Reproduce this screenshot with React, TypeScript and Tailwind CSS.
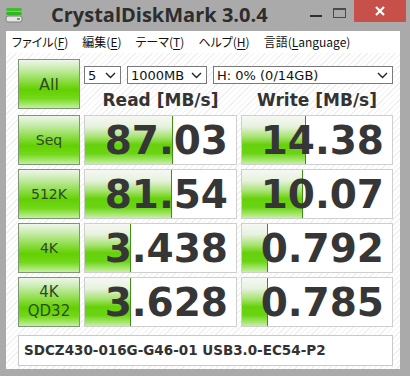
import React from "react";

const ui = { fontFamily: '"DejaVu Sans", "Liberation Sans", sans-serif' };
const jp = { fontFamily: '"Noto Sans CJK JP", "Noto Sans", sans-serif' };

type Row = { label: string[]; read: string; write: string; readFill: number; writeFill: number };

const rows: Row[] = [
  { label: ["Seq"], read: "87.03", write: "14.38", readFill: 88, writeFill: 64 },
  { label: ["512K"], read: "81.54", write: "10.07", readFill: 87, writeFill: 61 },
  { label: ["4K"], read: "3.438", write: "0.792", readFill: 46, writeFill: 26 },
  { label: ["4K", "QD32"], read: "3.628", write: "0.785", readFill: 46, writeFill: 26 },
];

const Chevron = () => (
  <svg width="11" height="7" viewBox="0 0 11 7" className="shrink-0">
    <polyline points="1,1 5.5,5.5 10,1" fill="none" stroke="#222" strokeWidth="1.4" />
  </svg>
);

const Select = ({ text, className }: { text: string; className: string }) => (
  <div className={`h-[18px] border border-[#7a7a7a] bg-white flex items-center justify-between pl-[3px] pr-[4px] text-[13px] text-[#111] leading-none ${className}`}>
    <span>{text}</span>
    <Chevron />
  </div>
);

const GreenButton = ({ lines }: { lines: string[] }) => (
  <div className="h-[50px] border border-[#7f9479] bg-[linear-gradient(180deg,#eef6ea_0%,#c9ecae_18%,#8fde4c_42%,#62d000_62%,#74d81c_80%,#c3f09e_100%)] flex flex-col items-center justify-center text-[#2e4a24] leading-[19px]">
    {lines.map((l) => (
      <span key={l} className={l === "All" ? "text-[16px]" : lines.length > 1 ? "text-[15px]" : "text-[14px]"}>
        {l}
      </span>
    ))}
  </div>
);

const Result = ({ value, fill }: { value: string; fill: number }) => (
  <div className="relative h-[50px] border border-[#cfcfcf] bg-white flex items-center justify-end pr-[8px]">
    <div
      className="absolute left-0 top-0 bottom-0 border-r border-[#3f8f17] bg-[linear-gradient(180deg,#f6f8f4_0%,#e6f2de_22%,#a6e36e_44%,#66d10a_60%,#6ad414_78%,#c6f0a3_100%)]"
      style={{ width: fill }}
    />
    <span className="relative text-[39px] font-bold text-[#363636] leading-none">{value}</span>
  </div>
);

const DriveIcon = () => (
  <svg width="18" height="16" viewBox="0 0 18 16">
    <rect x="1" y="1" width="16" height="3" rx="1.5" fill="#3fbf2a" />
    <rect x="1" y="5" width="16" height="3" rx="1.5" fill="#36b524" />
    <rect x="1" y="9" width="16" height="6" rx="2" fill="#e4e4e4" stroke="#7d7d7d" />
    <rect x="12" y="11" width="3" height="2" fill="#3fbf2a" />
  </svg>
);

const MenuItem = ({ pre, key1 }: { pre: string; key1: string }) => (
  <span className="whitespace-nowrap">
    {pre}(<span className="underline underline-offset-2">{key1}</span>)
  </span>
);

export default function App() {
  return (
    <div className="w-[410px] h-[376px] bg-[#aaaaaa] flex flex-col overflow-hidden" style={ui}>
      {/* title bar */}
      <div className="h-[31px] flex items-start shrink-0 pr-[4px]">
        <div className="pl-[5px] pt-[7px]">
          <DriveIcon />
        </div>
        <div
          className="ml-[28px] mt-[1px] text-[20px] font-bold text-[#2d2d2d] leading-[27px]"
          style={{ fontFamily: '"Open Sans", "Noto Sans", sans-serif' }}
        >
          CrystalDiskMark 3.0.4
        </div>
        <div className="ml-auto flex items-start">
          <div className="w-[12px] h-[2px] bg-[#2f2f2f] mt-[15px]" />
          <div className="ml-[11px] mt-[8px] w-[13px] h-[10px] border border-[#4a4a4a] border-t-[2px]" />
          <div className="ml-[8px] w-[52px] h-[22px] bg-[#c7504b] flex items-center justify-center">
            <svg width="10" height="10" viewBox="0 0 10 10">
              <path d="M1 1 L9 9 M9 1 L1 9" stroke="#fff" strokeWidth="2.2" />
            </svg>
          </div>
        </div>
      </div>

      <div className="flex-1 flex flex-col ml-[6px] mr-[10px] mb-[7px] bg-white">
        {/* menu */}
        <div
          className="h-[22px] flex items-center gap-[14px] pl-[6px] text-[12px] text-[#111] [font-feature-settings:'palt']"
          style={jp}
        >
          <MenuItem pre="ファイル" key1="F" />
          <MenuItem pre="編集" key1="E" />
          <MenuItem pre="テーマ" key1="T" />
          <MenuItem pre="ヘルプ" key1="H" />
          <span className="whitespace-nowrap">
            言語(<span className="underline underline-offset-2">L</span>anguage)
          </span>
        </div>

        {/* client */}
        <div className="flex-1 pl-[12px] pt-[6px] bg-[repeating-linear-gradient(135deg,#ffffff_0px,#ffffff_3px,#f0f0f0_3px,#f0f0f0_4px)]">
          <div className="grid grid-cols-[62px_153px_152px] gap-x-[4px] gap-y-[4px]">
            <GreenButton lines={["All"]} />
            <div className="col-span-2 flex flex-col">
              <div className="flex gap-[6px] mt-[7px]">
                <Select text="5" className="w-[37px]" />
                <Select text="1000MB" className="w-[80px]" />
                <Select text="H: 0% (0/14GB)" className="flex-1" />
              </div>
              <div className="flex mt-[5px] text-[17px] font-bold text-[#333] leading-[22px]">
                <div className="w-[153px] text-center">Read [MB/s]</div>
                <div className="w-[4px]" />
                <div className="w-[152px] text-center">Write [MB/s]</div>
              </div>
            </div>
            {rows.map((r) => (
              <React.Fragment key={r.label.join("")}>
                <GreenButton lines={r.label} />
                <Result value={r.read} fill={r.readFill} />
                <Result value={r.write} fill={r.writeFill} />
              </React.Fragment>
            ))}
          </div>
          <div className="mt-[8px] w-[375px] h-[31px] border border-[#c9c9c9] bg-white flex items-center pl-[5px] text-[13.5px] font-bold text-[#333]">
            SDCZ430-016G-G46-01 USB3.0-EC54-P2
          </div>
        </div>
      </div>
    </div>
  );
}
